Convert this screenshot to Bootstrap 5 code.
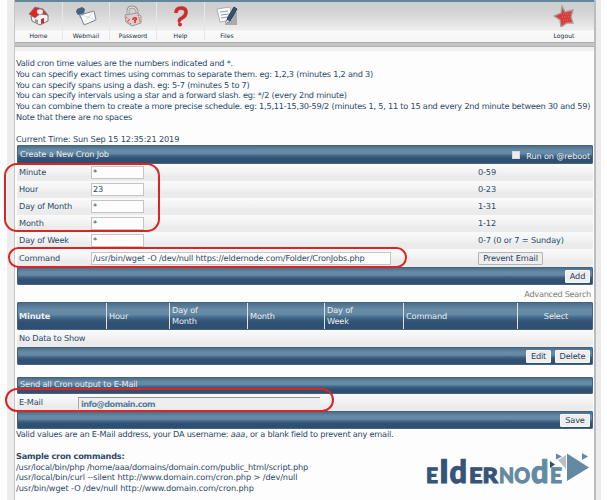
<!DOCTYPE html>
<html lang="en">
<head>
<meta charset="utf-8">
<meta name="viewport" content="width=device-width, initial-scale=1">
<title>Cron Jobs</title>
<link href="https://cdn.jsdelivr.net/npm/bootstrap@5.3.0/dist/css/bootstrap.min.css" rel="stylesheet">
<style>
html,body{height:500px;overflow:hidden;background:#fdfdfd}
body{font-family:"DejaVu Sans",Verdana,sans-serif;font-size:8.2px;letter-spacing:-.16px;line-height:10.85px;color:#2c4a69;text-rendering:geometricPrecision}
.prose{letter-spacing:-.22px;white-space:nowrap}
.edge-l{width:7px;flex:none;background:#ececec;margin-left:7px;height:500px}
.edge-r{width:7px;flex:none;background:#ebebeb;border-left:2px solid #bcbcbc;height:500px}
.sheet{width:580px;flex:none;border-left:1px solid #c6c6c6;height:500px}
.topbar{height:42px;border-top:2px solid #5f87a1;background:linear-gradient(#cdcdcd 0,#d3d3d3 10px,#ebebeb 26px,#ededed 28px,#fafafa 29px,#f6f6f6 100%)}
.strip{height:5px;background:#c4c4c4;border-top:1px solid #adadad;border-bottom:1px solid #b1b1b1}
.strip2{height:4px;background:#f0f0f0}
.tool{width:46px;flex:none;font-size:6.1px;line-height:8px;color:#222f3d;letter-spacing:0}
.tool svg{width:22px;height:22px;display:block;margin:3px auto 5.5px}
.sep{border-left:1px solid #e6e6e6;height:38px}
.bar{background:linear-gradient(#4a6d8d 0,#678ba5 25%,#6389a4 44%,#3f6485 58%,#2f5073 76%,#305072 100%);color:#ececec;border:1px solid #47637e;border-radius:1px}
.wide{width:576px;margin-left:2px}
.field-row{height:17px;background:linear-gradient(#fafafa,#f3f3f3 45%,#ebebeb 70%,#ebebeb);padding-left:2px}
.lbl{width:72px;flex:none}
.fld{height:13px;border:1px solid #c4c4c4;background:#fdfdfd;padding:0 1px;line-height:11px;white-space:nowrap}
.fld-s{width:53px}
.fld-l{width:300px}
.hint{margin-left:auto;width:115px}
.key{line-height:10px;height:13px;border:1px solid #f7f7f7;border-radius:1px;background:#eee;color:#26415f;display:flex;align-items:center;justify-content:center;white-space:nowrap}
.key-out{border-color:#b4b4b4}
.th-c{border-right:1px solid #e2e2e2;padding-left:2px;display:flex;align-items:center;flex:none}
.ring{position:absolute;border:2px solid #d92624}
.chk{width:8px;height:8px;background:#ededed;border:1px solid #d9d9d9}
.mail{width:242px;height:12px;border-top:1px solid #929292;border-left:1px solid #a9a9a9;background:#eee;font-weight:bold;color:#56809c;padding-left:2px;line-height:12px;letter-spacing:-.55px}
.brand-art{position:absolute;left:420px;top:448px;letter-spacing:0}
</style>
<script src="https://cdn.jsdelivr.net/npm/bootstrap@5.3.0/dist/js/bootstrap.bundle.min.js"></script>
</head>
<body>
<div class="d-flex position-relative">
 <div class="edge-l"></div>
 <main class="sheet">
  <nav class="topbar d-flex text-center">
   <div class="tool" style="width:47px"><svg viewBox="0 0 22 22"><path d="M3 11 13 9 20 10V16L12 20 4 16Z" fill="#f4f4f4" stroke="#777"/><path d="M1 9 7 2 15 4 20 10 13 8 7 13Z" fill="#df2525" stroke="#777" stroke-width=".7"/><path d="M9 8V5l3-1 3 1v3l-3 2Z" fill="#eee" stroke="#888" stroke-width=".5"/><path d="M13 14l3-1v5l-3 1Z" fill="#d42a28"/><path d="M7 14l3 1v3l-3-1Z" fill="#999"/></svg>Home</div>
   <div class="sep"></div>
   <div class="tool"><svg viewBox="0 0 22 22"><path d="M2 4 7 2 10 4 9 9 3 10 1 7Z" fill="#45627e"/><path d="M4 10 8 8 9 14 5 13Z" fill="#7f99ab"/><path d="M5 10 19 6 21 15 9 20Z" fill="#fff" stroke="#778491"/><path d="M5 10 14 12 19 6M9 20 13 12 21 15" fill="none" stroke="#ccc" stroke-width=".7"/></svg>Webmail</div>
   <div class="sep"></div>
   <div class="tool"><svg viewBox="0 0 22 22"><path d="M6 10V6q0-4 4-4t5 4v4" fill="none" stroke="#999" stroke-width="3"/><path d="M6 10V6q0-4 4-4t5 4v4" fill="none" stroke="#e8e8e8"/><path d="M3 10 15 8 19 11V18L10 21 4 17Z" fill="#dccccc" stroke="#999"/><path d="M11 15q0-3 3-2 1 2-1 2v3" fill="none" stroke="#d92725" stroke-width="1.5"/><path d="M4 12l4 3-3 1 4 3M16 10l2 7" fill="none" stroke="#d92725" stroke-width=".9" stroke-dasharray="1 1"/></svg>Password</div>
   <div class="sep"></div>
   <div class="tool" style="width:47px"><svg viewBox="0 0 22 22"><path d="M6 8q0-5 5-5t5 4-4 6-2 4" fill="none" stroke="#9c8b8b" stroke-width="4"/><path d="M6 8q0-5 5-5t5 4-4 6-2 4" fill="none" stroke="#dc2525" stroke-width="3"/><circle cx="10" cy="19.500" r="2" fill="#dc2525"/></svg>Help</div>
   <div class="sep"></div>
   <div class="tool" style="width:44px"><svg viewBox="0 0 22 22"><path d="M9 7h12v13H9Z" fill="#aaa"/><path d="M1 4 14 2 17 15 4 17Z" fill="#fafafa" stroke="#999" stroke-width=".7"/><path d="M4 7l8-1M5 10l8-1M5 13l7-1" stroke="#8da0ae"/><path d="M18 2 21 4 14 16 10 18 12 12Z" fill="#315476" stroke="#263f59"/><path d="M11 15l-2 4 5-3" fill="#ddd"/></svg>Files</div>
   <div class="tool ms-auto" style="margin-right:7px"><svg viewBox="0 0 22 22"><path d="M9 1 12 7 20 5 18 12 20 18 14 18 8 22 7 15 1 11 8 8Z" fill="#df3937" stroke="#a5a09f" stroke-width="1.3"/><path d="M10 9h7M9 12h8M10 15h7M10 18h3" stroke="#b57e7d" stroke-dasharray="1 1"/></svg>Logout</div>
  </nav>
  <div class="strip"></div><div class="strip2"></div>
  <section class="prose" style="padding:6.900px 0 0 1px;height:94px">
   <div>Valid cron time values are the numbers indicated and *.</div>
   <div>You can specifiy exact times using commas to separate them. eg: 1,2,3 (minutes 1,2 and 3)</div>
   <div>You can specify spans using a dash. eg: 5-7 (minutes 5 to 7)</div>
   <div>You can specify intervals using a star and a forward slash. eg: */2 (every 2nd minute)</div>
   <div>You can combine them to create a more precise schedule. eg: 1,5,11-15,30-59/2 (minutes 1, 5, 11 to 15 and every 2nd minute between 30 and 59)</div>
   <div>Note that there are no spaces</div><br>
   <div style="letter-spacing:-.13px">Current Time: Sun Sep 15 12:35:21 2019</div>
  </section>
  <section class="wide">
   <div class="bar d-flex align-items-center" style="height:19px;padding:0 2px"><span>Create a New Cron Job</span><i class="chk ms-auto me-1"></i><span style="padding:3px 0 0 2px">Run on @reboot</span></div>
   <div class="field-row d-flex align-items-center"><span class="lbl">Minute</span><div class="fld fld-s">*</div><span class="hint">0-59</span></div>
   <div class="field-row d-flex align-items-center"><span class="lbl">Hour</span><div class="fld fld-s">23</div><span class="hint">0-23</span></div>
   <div class="field-row d-flex align-items-center"><span class="lbl">Day of Month</span><div class="fld fld-s">*</div><span class="hint">1-31</span></div>
   <div class="field-row d-flex align-items-center"><span class="lbl">Month</span><div class="fld fld-s">*</div><span class="hint">1-12</span></div>
   <div class="field-row d-flex align-items-center"><span class="lbl">Day of Week</span><div class="fld fld-s">*</div><span class="hint">0-7 (0 or 7 = Sunday)</span></div>
   <div class="field-row d-flex align-items-center" style="height:18px"><span class="lbl">Command</span><div class="fld fld-l">/usr/bin/wget -O /dev/null https://eldernode.com/Folder/CronJobs.php</div><span class="hint"><span class="key key-out" style="width:65px">Prevent Email</span></span></div>
   <div class="bar d-flex align-items-center justify-content-end" style="height:18px;padding-right:2px"><span class="key" style="width:25px">Add</span></div>
   <div class="text-end" style="height:17px;padding:4px 2px 0;color:#7f7f7f;letter-spacing:-.3px">Advanced Search</div>
   <div class="bar d-flex" style="height:28px">
    <div class="th-c fw-bold" style="width:89px;padding-left:1px">Minute</div><div class="th-c" style="width:63px">Hour</div><div class="th-c" style="width:78px">Day of<br>Month</div><div class="th-c" style="width:77px">Month</div><div class="th-c" style="width:79px">Day of<br>Week</div><div class="th-c" style="width:114px">Command</div><div class="th-c justify-content-center border-0" style="width:74px">Select</div>
   </div>
   <div class="field-row d-flex align-items-center">No Data to Show</div>
   <div class="bar d-flex align-items-center justify-content-end gap-1" style="height:18px;padding-right:2px"><span class="key" style="width:25px">Edit</span><span class="key" style="width:35px">Delete</span></div>
   <div style="height:12px"></div>
   <div class="bar" style="height:17px;padding:1px 2px">Send all Cron output to E-Mail</div>
   <div class="field-row d-flex align-items-center"><span style="width:59px">E-Mail</span><div class="mail">info@domain.com</div></div>
   <div class="bar d-flex align-items-center justify-content-end" style="height:18px;padding-right:2px"><span class="key" style="width:30px">Save</span></div>
  </section>
  <section class="prose" style="padding-left:1px">
   <div>Valid values are an E-Mail address, your DA username: <em>aaa</em>, or a blank field to prevent any email.</div><br>
   <div class="fw-bold">Sample cron commands:</div>
   <div style="letter-spacing:-.15px">/usr/local/bin/php /home/aaa/domains/domain.com/public_html/script.php</div>
   <div style="letter-spacing:-.1px">/usr/local/bin/curl --silent http://www.domain.com/cron.php &gt; /dev/null</div>
   <div style="letter-spacing:-.1px">/usr/bin/wget -O /dev/null http://www.domain.com/cron.php</div>
  </section>
 </main>
 <div class="edge-r"></div>
 <div class="ring" style="left:4px;top:163px;width:156px;height:69px;border-radius:13px"></div>
 <div class="ring" style="left:8px;top:247px;width:399px;height:21px;border-radius:11px"></div>
 <div class="ring" style="left:5px;top:388px;width:329px;height:24px;border-radius:12px"></div>
 <svg class="brand-art" width="172" height="46" viewBox="420 448 172 46" font-family="Lato, sans-serif" font-weight="900">
  <g fill="#345577" stroke="#345577"><text x="426" y="482.500" font-size="21" textLength="12" lengthAdjust="spacingAndGlyphs">E</text><text x="439.500" y="482.500" font-size="32" textLength="9" lengthAdjust="spacingAndGlyphs">l</text><text x="449.500" y="482.500" font-size="32" textLength="17.500" lengthAdjust="spacingAndGlyphs">d</text><text x="469" y="482.500" font-size="21" textLength="29" lengthAdjust="spacingAndGlyphs">ER</text></g>
  <g fill="#6489a3"><g stroke="#6489a3"><text x="499" y="482.500" font-size="21" textLength="31" lengthAdjust="spacingAndGlyphs">NO</text><text x="531" y="482.500" font-size="32" textLength="17.500" lengthAdjust="spacingAndGlyphs">d</text><text x="550" y="482.500" font-size="21" textLength="12" lengthAdjust="spacingAndGlyphs">E</text></g>
  <path d="M567 453.500 589 467.500 567 481Z"/><path d="M582 453 588 456.500 582 460Z"/><path d="M556 453.500l6 3-6 3Z"/></g>
  <path d="M550 468v-7l5 3.500Z" fill="#2f4f72"/><path d="M558 460l8-5v14Z" fill="#b6bfc4"/>
 </svg>
</div>
</body>
</html>
